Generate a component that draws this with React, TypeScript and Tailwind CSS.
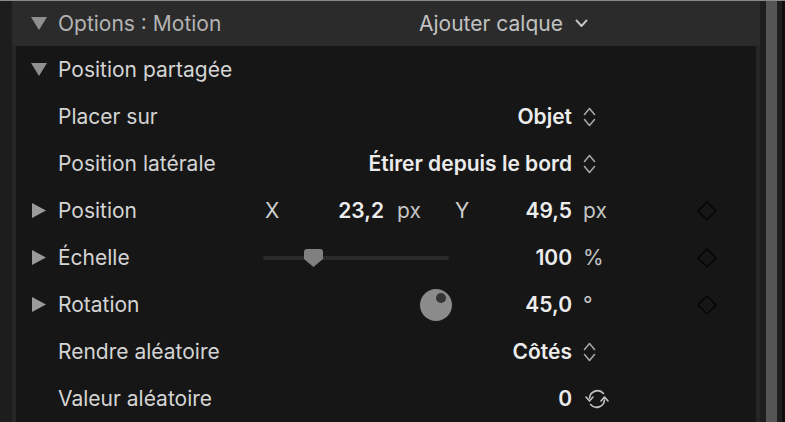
import React from "react";

const font = { fontFamily: "Inter, 'Liberation Sans', sans-serif" };

function TriDown() {
  return (
    <svg width="16" height="13" viewBox="0 0 16 13">
      <path d="M0 0 H16 L8 13 Z" fill="#8f8f8f" />
    </svg>
  );
}

function TriRight() {
  return (
    <svg width="14" height="15" viewBox="0 0 14 15">
      <path d="M0 0 L14 7.5 L0 15 Z" fill="#9a9a9a" />
    </svg>
  );
}

function UpDown() {
  return (
    <svg width="13" height="20" viewBox="0 0 13 20" fill="none" stroke="#a6a6a6" strokeWidth="1.6" strokeLinecap="round" strokeLinejoin="round">
      <path d="M1.5 7.5 L6.5 1.5 L11.5 7.5" />
      <path d="M1.5 12.5 L6.5 18.5 L11.5 12.5" />
    </svg>
  );
}

function Diamond() {
  return (
    <svg width="20" height="20" viewBox="0 0 20 20" fill="none">
      <path d="M10 1 L19 10 L10 19 L1 10 Z" stroke="#060606" strokeWidth="1.6" strokeLinejoin="round" />
    </svg>
  );
}

function Refresh() {
  return (
    <svg width="28" height="22" viewBox="0 0 28 22" fill="none" stroke="#c4c4c4" strokeWidth="1.6" strokeLinecap="round" strokeLinejoin="round">
      <path d="M6.5 10 A8 8 0 0 1 20.5 5.5" />
      <path d="M21.5 12 A8 8 0 0 1 7.5 16.5" />
      <path d="M3 9 L6.5 13 L10 9" />
      <path d="M18 13 L21.5 9 L25 13" />
    </svg>
  );
}

function Row({
  tri,
  label,
  children,
  unit,
  keyframe,
}: {
  tri?: boolean;
  label: string;
  children?: React.ReactNode;
  unit?: React.ReactNode;
  keyframe?: boolean;
}) {
  return (
    <div className="flex h-[47px] items-center">
      <div className="flex w-[42px] items-center pl-[16px]">{tri && <TriRight />}</div>
      <div className="w-[200px] text-[21px] text-[#d4d4d4]">{label}</div>
      <div className="flex w-[314px] items-center justify-end">{children}</div>
      <div className="flex w-[125px] items-center pl-[11px] text-[21px] text-[#c4c4c4]">{unit}</div>
      <div className="flex w-[20px] items-center">{keyframe && <Diamond />}</div>
    </div>
  );
}

const val = "text-[21px] font-semibold text-[#ececec]";

export default function App() {
  return (
    <div style={font} className="flex h-[422px] w-[785px] overflow-hidden border-t border-[#8a8a8a] bg-[#1d1d1d]">
      <div className="w-[12px] bg-[#1d1d1d]" />
      <div className="flex w-[748px] flex-col bg-[#2b2b2b]">
        <div className="flex h-[45px] shrink-0 items-center">
          <div className="flex w-[46px] items-center pl-[19px]">
            <TriDown />
          </div>
          <div className="w-[361px] text-[21px] text-[#b4b4b4]">Options : Motion</div>
          <div className="flex items-center gap-[12px] text-[21px] text-[#c2c2c2]">
            <span>Ajouter calque</span>
            <svg width="13" height="9" viewBox="0 0 13 9" fill="none" stroke="#c2c2c2" strokeWidth="2" strokeLinecap="round" strokeLinejoin="round">
              <path d="M1.5 1.5 L6.5 7 L11.5 1.5" />
            </svg>
          </div>
        </div>
        <div className="flex flex-1 bg-[#262626] px-[4px]">
          <div className="flex-1 bg-[#161616]">
            <div className="flex h-[47px] items-center">
              <div className="flex w-[42px] items-center pl-[15px]">
                <TriDown />
              </div>
              <div className="text-[21px] text-[#d4d4d4]">Position partagée</div>
            </div>
            <Row label="Placer sur" unit={<UpDown />}>
              <span className={val}>Objet</span>
            </Row>
            <Row label="Position latérale" unit={<UpDown />}>
              <span className={val}>Étirer depuis le bord</span>
            </Row>
            <Row tri label="Position" unit="px" keyframe>
              <div className="flex w-full items-center text-[21px]">
                <span className="ml-[7px] w-[20px] text-[#cfcfcf]">X</span>
                <span className={`w-[99px] text-right ${val}`}>23,2</span>
                <span className="ml-[13px] w-[58px] text-[#c4c4c4]">px</span>
                <span className="w-[20px] text-[#cfcfcf]">Y</span>
                <span className={`flex-1 text-right ${val}`}>49,5</span>
              </div>
            </Row>
            <Row tri label="Échelle" unit="%" keyframe>
              <div className="flex w-full items-center">
                <div className="relative ml-[5px] h-[4px] w-[186px] rounded-full bg-[#2b2b2b]">
                  <svg className="absolute left-[41px] top-[-7px]" width="19" height="18" viewBox="0 0 19 18">
                    <path d="M0 3 Q0 0 3 0 H16 Q19 0 19 3 V10 L9.5 18 L0 10 Z" fill="#808080" />
                  </svg>
                </div>
                <span className={`flex-1 text-right ${val}`}>100</span>
              </div>
            </Row>
            <Row tri label="Rotation" unit="°" keyframe>
              <div className="flex w-full items-center">
                <svg className="ml-[162px]" width="32" height="32" viewBox="0 0 32 32">
                  <circle cx="16" cy="16" r="16" fill="#8b8b8b" />
                  <circle cx="21" cy="9" r="5" fill="#353535" />
                </svg>
                <span className={`flex-1 text-right ${val}`}>45,0</span>
              </div>
            </Row>
            <Row label="Rendre aléatoire" unit={<UpDown />}>
              <span className={val}>Côtés</span>
            </Row>
            <Row label="Valeur aléatoire" unit={<Refresh />}>
              <span className={val}>0</span>
            </Row>
          </div>
        </div>
      </div>
      <div className="w-[6px] bg-[#1e1e1e]" />
      <div className="w-[11px] bg-[#555555]" />
      <div className="w-[5px] bg-[#1f1f1f]" />
      <div className="w-[3px] bg-[#0f0f0f]" />
    </div>
  );
}
